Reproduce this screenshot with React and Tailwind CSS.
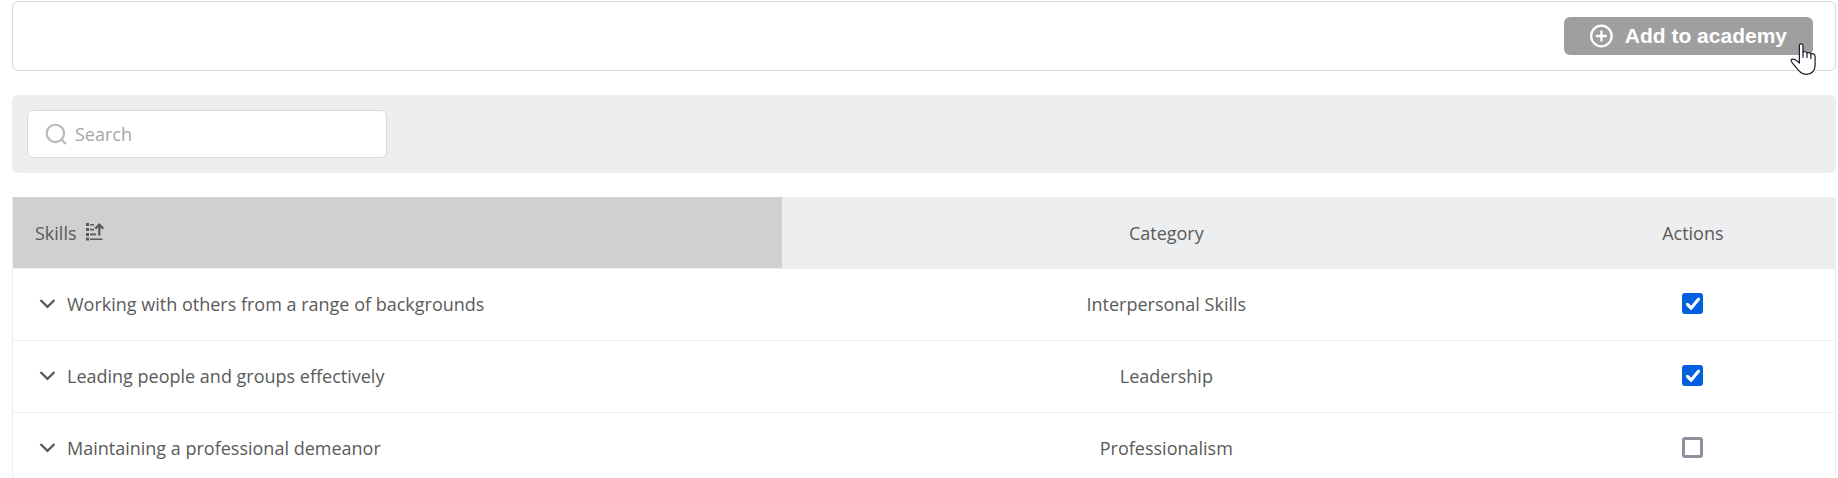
import React, { useState } from 'react';

const initialSkills = [
    { id: 1, name: 'Working with others from a range of backgrounds', category: 'Interpersonal Skills', selected: true },
    { id: 2, name: 'Leading people and groups effectively', category: 'Leadership', selected: true },
    { id: 3, name: 'Maintaining a professional demeanor', category: 'Professionalism', selected: false },
];

function PlusCircleIcon() {
    return (
        <svg className="size-6" viewBox="0 0 24 24" fill="none" stroke="currentColor" strokeWidth="2.3" strokeLinecap="round" aria-hidden="true">
            <circle cx="12.4" cy="12" r="10.3" />
            <path d="M12.4 7.4v9.2M7.8 12H17" />
        </svg>
    );
}

function SearchIcon() {
    return (
        <svg className="size-6 shrink-0 text-[#b8b8b8]" viewBox="0 0 24 24" fill="none" stroke="currentColor" strokeWidth="2.1" aria-hidden="true">
            <circle cx="11.4" cy="11.4" r="8.7" />
            <path d="M17.4 17.4l4.5 4.5" />
        </svg>
    );
}

function SortIcon() {
    return (
        <svg className="size-5" viewBox="0 0 20 20" aria-hidden="true">
            <path fill="currentColor" d="M1 0h3v3H1zM1 5h3v3H1zM1 10h3v3H1zM1 14.5h3v3H1zM5 1h4v1.6H5zM5 5.8h4v1.6H5zM5 10.6h6v1.6H5zM5 15.4h12.5V17H5z" />
            <path fill="none" stroke="currentColor" strokeWidth="2.2" d="M14.3 12.6V1.5M10.3 5.6l4-4 4 4" />
        </svg>
    );
}

function ChevronIcon() {
    return (
        <svg className="w-4 h-5" viewBox="0 0 16 20" fill="none" stroke="currentColor" strokeWidth="2.3" aria-hidden="true">
            <path d="M1.5 6l7 6.8 7-6.8" />
        </svg>
    );
}

function HandPointer() {
    return (
        <svg className="absolute top-[26px] -right-[3px] w-[26px] h-8" viewBox="0 0 26 32" aria-hidden="true">
            <path
                fill="#fff"
                stroke="#1b1b2e"
                strokeWidth="1.2"
                strokeLinejoin="round"
                d="M9.4 20V2.8c0-1.3.7-2 1.8-2s1.8.7 1.8 2v6.4c.6-.7 3.3-.7 4 .8.8-.7 3.2-.6 3.9 1 .8-.6 4.2-.6 4.2 2.4v9c0 5-3.3 9-8.6 9-3.6 0-5.6-1.4-7.2-3.2-2.2-2.5-4.5-5.2-6.6-7.9-1.6-2-1.9-2.4-1.7-3.2.4-1.3 2.8-1.2 4.7 0 1.3.8 2.5 1.8 3.7 2.9z"
            />
            <path fill="none" stroke="#1b1b2e" strokeWidth="1.2" strokeLinecap="round" d="M13 9v5.2M17 10v4.6M20.9 11v4.6" />
        </svg>
    );
}

function SkillCheckbox({ label, checked, onChange }) {
    return (
        <span className="grid place-items-center">
            <input
                type="checkbox"
                aria-label={label}
                checked={checked}
                onChange={onChange}
                className="peer col-start-1 row-start-1 size-[21px] appearance-none rounded-[3px] border-3 border-[#8f8f9d] bg-white checked:border-[#0060df] checked:bg-[#0060df]"
            />
            <svg className="pointer-events-none col-start-1 row-start-1 invisible peer-checked:visible size-[21px]" viewBox="0 0 21 21" fill="none" stroke="#fff" strokeWidth="3.2" strokeLinecap="round" strokeLinejoin="round" aria-hidden="true">
                <path d="M5.5 11.4l3.5 3.8 7.5-9" />
            </svg>
        </span>
    );
}

function App() {
    const [skills, setSkills] = useState(initialSkills);
    const [search, setSearch] = useState('');

    const toggleSkill = (id) => {
        setSkills(skills.map((skill) => (skill.id === id ? { ...skill, selected: !skill.selected } : skill)));
    };

    const visibleSkills = skills.filter((skill) => skill.name.toLowerCase().includes(search.toLowerCase()));

    return (
        <div className="pt-px pl-3 pr-0.5 bg-white text-lg text-[#5a5a5a] font-['Open_Sans',sans-serif]">
            <div className="flex justify-end py-[15px] pr-[22px] border border-[#d9d9d9] rounded-md">
                <button
                    type="button"
                    className="relative flex items-center gap-3 h-[38px] pl-[25px] pr-[26px] rounded-md bg-[#9f9f9f] text-white text-[21px] font-bold font-['Liberation_Sans',sans-serif]"
                >
                    <PlusCircleIcon />
                    Add to academy
                    <HandPointer />
                </button>
            </div>

            <div className="mt-6 p-[15px] rounded-md bg-[#edeef0]">
                <label className="flex items-center gap-[7px] w-[360px] h-12 px-4 bg-white border border-[#d9d9d9] rounded-md">
                    <SearchIcon />
                    <input
                        type="text"
                        aria-label="Search"
                        placeholder="Search"
                        value={search}
                        onChange={(e) => setSearch(e.target.value)}
                        className="w-full min-w-0 outline-none placeholder:text-[#a6a6a6]"
                    />
                </label>
            </div>

            <table className="mt-6 w-full table-fixed border-separate border-spacing-0 border-x border-[#edeef0]">
                <colgroup>
                    <col className="w-[42.2%]" />
                    <col className="w-[42.2%]" />
                    <col />
                </colgroup>
                <thead>
                    <tr className="h-[72px] bg-[#edeef0]">
                        <th scope="col" className="pl-[22px] bg-[#d0d0d0] border-b border-[#edeef0] font-normal">
                            <button type="button" className="flex items-center gap-2">
                                Skills
                                <SortIcon />
                            </button>
                        </th>
                        <th scope="col" className="border-b border-[#edeef0] font-normal">Category</th>
                        <th scope="col" className="border-b border-[#edeef0] font-normal">Actions</th>
                    </tr>
                </thead>
                <tbody>
                    {visibleSkills.map((skill) => (
                        <tr key={skill.id} className="h-[72px]">
                            <td className="pl-[26px] pb-0.5 border-b border-[#edeef0]">
                                <button type="button" className="flex items-center gap-3">
                                    <ChevronIcon />
                                    {skill.name}
                                </button>
                            </td>
                            <td className="pb-0.5 border-b border-[#edeef0] text-center">{skill.category}</td>
                            <td className="pb-0.5 border-b border-[#edeef0]">
                                <SkillCheckbox
                                    label={`Select ${skill.name}`}
                                    checked={skill.selected}
                                    onChange={() => toggleSkill(skill.id)}
                                />
                            </td>
                        </tr>
                    ))}
                </tbody>
            </table>
        </div>
    );
}

export default App;
